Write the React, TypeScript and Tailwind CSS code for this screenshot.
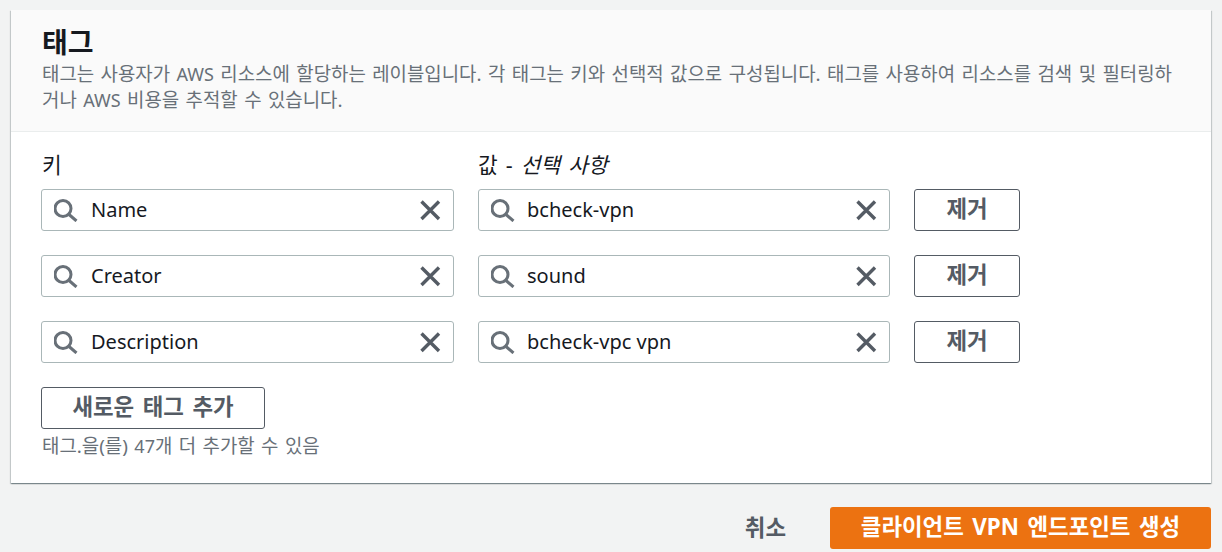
import type { ReactNode } from "react";

const F = "font-['Noto_Sans','Noto_Sans_CJK_KR',sans-serif]";

function K({ children }: { children: ReactNode }) {
  return <span className="text-[1.05em] [word-spacing:0.08em]">{children}</span>;
}

function B({ children }: { children: ReactNode }) {
  return <span className="text-[1.12em] [word-spacing:0.12em]">{children}</span>;
}

function SearchIcon() {
  return (
    <svg width="24" height="24" viewBox="0 0 24 24" fill="none" stroke="#687078" strokeWidth="3" className="shrink-0">
      <circle cx="9" cy="10.5" r="8" />
      <path d="M15 16.5L22.5 23" />
    </svg>
  );
}

function XIcon() {
  return (
    <svg width="22" height="22" viewBox="0 0 22 22" fill="none" stroke="#545b64" strokeWidth="3.4" className="shrink-0">
      <path d="M2.5 2.5L20 20M20 2.5L2.5 20" />
    </svg>
  );
}

function Field({ value, w, gap }: { value: string; w: string; gap: string }) {
  return (
    <div className={`${w} h-[42px] flex items-center bg-white border border-[#aab7b8] rounded-[3px] pl-[12px] pr-[12px]`}>
      <SearchIcon />
      <span className={`${gap} flex-1 text-[20px] leading-[24px] text-[#16191f]`}>{value}</span>
      <XIcon />
    </div>
  );
}

function Row({ k, v }: { k: string; v: string }) {
  return (
    <div className="flex gap-[24px]">
      <Field value={k} w="w-[413px]" gap="ml-[13px]" />
      <Field value={v} w="w-[412px]" gap="ml-[12px]" />
      <button className="w-[106px] h-[42px] pb-[2px] bg-white border border-[#545b64] rounded-[3px] text-[20px] font-bold text-[#545b64]"><B>제거</B></button>
    </div>
  );
}

export default function App() {
  return (
    <div className={`${F} w-[1222px] h-[552px] overflow-hidden bg-[#f2f3f3] pt-[10px] pl-[11px]`}>
      <div className="w-[1200px] h-[473px] bg-white shadow-[0_1px_1px_0_rgba(0,28,36,0.3),1px_1px_1px_0_rgba(0,28,36,0.15),-1px_1px_1px_0_rgba(0,28,36,0.15)]">
        <div className="h-[122px] bg-[#fafafa] border-b border-[#eaeded] pl-[31px] pr-[30px] pt-[14px]">
          <h2 className="text-[28px] leading-[36px] font-bold text-[#16191f]">태그</h2>
          <p className="text-[18px] leading-[26px] text-[#687078] mt-[1px]">
            <K>태그는 사용자가 </K>AWS<K> 리소스에 할당하는 레이블입니다. 각 태그는 키와 선택적 값으로 구성됩니다. 태그를 사용하여 리소스를 검색 및 필터링하거나 </K>AWS<K> 비용을 추적할 수 있습니다.</K>
          </p>
        </div>
        <div className="pl-[30px] pt-[19px]">
          <div className="flex gap-[24px] h-[27px] text-[20px] leading-[28px] text-[#16191f]">
            <div className="w-[413px] pl-[1px]"><span className="text-[1.07em] [word-spacing:0.12em]">키</span></div>
            <div className="w-[412px]"><span className="text-[1.07em] [word-spacing:0.12em]">값 - <i>선택 사항</i></span></div>
          </div>
          <div className="mt-[11px] flex flex-col gap-[24px]">
            <Row k="Name" v="bcheck-vpn" />
            <Row k="Creator" v="sound" />
            <Row k="Description" v="bcheck-vpc vpn" />
          </div>
          <button className="mt-[24px] w-[224px] h-[42px] pb-[3px] bg-white border border-[#545b64] rounded-[3px] text-[20px] font-bold text-[#545b64]"><B>새로운 태그 추가</B></button>
          <div className="mt-[4px] text-[18px] leading-[26px] text-[#687078] pl-[1px]"><K>태그.을(를) </K>47<K>개 더 추가할 수 있음</K></div>
        </div>
      </div>
      <div className="w-[1200px] mt-[24px] flex items-center justify-end">
        <button className="text-[20px] font-bold text-[#545b64] mr-[44px]"><B>취소</B></button>
        <button className="w-[381px] h-[42px] pb-[2px] bg-[#ec7211] rounded-[3px] text-[20px] font-bold text-white"><B>클라이언트 VPN 엔드포인트 생성</B></button>
      </div>
    </div>
  );
}
